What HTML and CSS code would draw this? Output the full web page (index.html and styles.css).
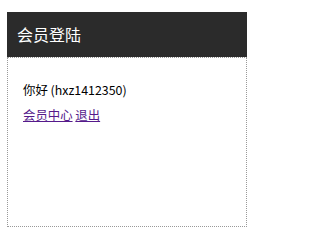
FILE: index.html
```html
<!DOCTYPE html>
<html>
<head>
<meta charset="utf-8">
<link rel="stylesheet" href="styles.css">
</head>
<body>
<div class="panel">
  <h3 class="panel-title">会员登陆</h3>
  <div class="panel-body">
    <p class="greet">你好 (hxz1412350)</p>
    <p class="links"><a href="#">会员中心</a> <a href="#">退出</a></p>
  </div>
</div>
</body>
</html>
```
FILE: styles.css
```css
html, body {
  margin: 0;
  padding: 0;
  background: #fff;
}
body {
  font-family: "Noto Sans CJK SC", "Liberation Sans", sans-serif;
  font-size: 12.4px;
  color: #000;
}
.panel {
  width: 240px;
  margin: 12px 0 0 7px;
}
.panel-title {
  margin: 0;
  height: 45px;
  line-height: 45px;
  padding-left: 10px;
  background: #2b2b2b;
  color: #fff;
  font-size: 16px;
  font-weight: normal;
}
.panel-body {
  border: 1px dotted #999;
  padding: 0 15px;
  box-sizing: border-box;
  height: 170px;
}
.greet {
  margin: 0;
  padding-top: 22px;
  line-height: 20px;
}
.links {
  margin: 5px 0 0;
  line-height: 20px;
}
.links a {
  color: #551a8b;
}
```
